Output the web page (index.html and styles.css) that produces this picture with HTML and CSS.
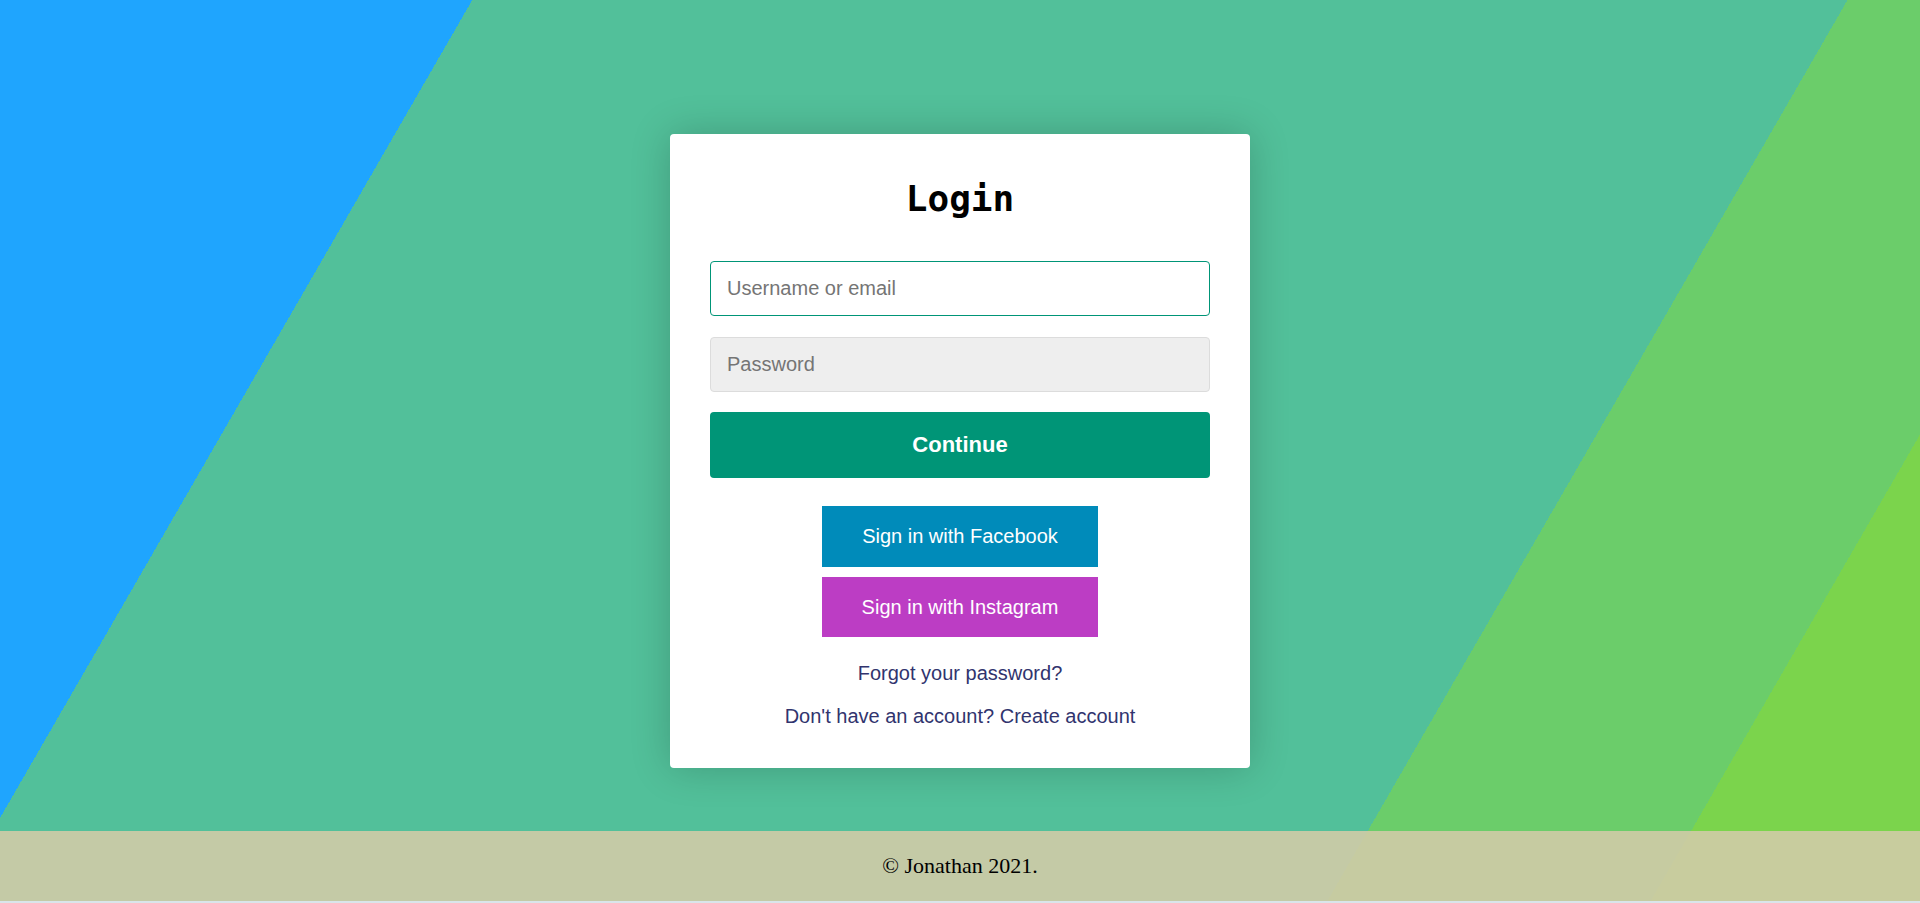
FILE: index.html
```html
<!DOCTYPE html>
<html lang="en">
<head>
<meta charset="utf-8">
<title>Login</title>
<link rel="stylesheet" href="styles.css">
</head>
<body>
<div class="page">
  <main class="main">
    <div class="card">
      <h1 class="title">Login</h1>
      <form class="form">
        <input class="field field-user" type="text" placeholder="Username or email">
        <input class="field field-pass" type="password" placeholder="Password">
        <button class="btn-continue" type="button">Continue</button>
      </form>
      <div class="social">
        <button class="btn-social btn-fb" type="button">Sign in with Facebook</button>
        <button class="btn-social btn-ig" type="button">Sign in with Instagram</button>
      </div>
      <div class="links">
        <a class="link" href="#">Forgot your password?</a>
        <a class="link" href="#">Don't have an account? Create account</a>
      </div>
    </div>
  </main>
  <footer class="footer">
    <p class="footer-text">© Jonathan 2021.</p>
  </footer>
</div>
<div class="strip"></div>
</body>
</html>
```

FILE: styles.css
```css
html, body {
  margin: 0;
  padding: 0;
}

body {
  height: 903px;
  overflow: hidden;
  background: #d9e5ea;
  font-family: "Liberation Sans", Arial, sans-serif;
}

.page {
  height: 901px;
  display: flex;
  flex-direction: column;
  background: linear-gradient(120deg,
    #1fa5fe 0, #1fa5fe 409px,
    #52c09a 409px, #52c09a 1600px,
    #6bcd6a 1600px, #6bcd6a 1880px,
    #7bd44c 1880px);
}

.main {
  flex: 1;
  display: flex;
  flex-direction: column;
  align-items: center;
  padding-top: 134px;
  box-sizing: border-box;
}

.card {
  width: 580px;
  box-sizing: border-box;
  background: #fff;
  border-radius: 4px;
  padding: 44px 40px 40px;
  box-shadow: 0 0 40px rgba(0, 0, 0, 0.2);
  display: flex;
  flex-direction: column;
}

.title {
  margin: 0 0 41px;
  font-family: "DejaVu Sans Mono", monospace;
  font-weight: bold;
  font-size: 36px;
  line-height: 42px;
  text-align: center;
  color: #000;
}

.form {
  display: flex;
  flex-direction: column;
  margin: 0;
}

.field {
  height: 55px;
  box-sizing: border-box;
  padding: 0 16px;
  font-family: "Liberation Sans", Arial, sans-serif;
  font-size: 20px;
  border-radius: 4px;
  outline: none;
  color: #333;
}

.field::placeholder {
  color: #757575;
}

.field-user {
  border: 1px solid #009577;
  background: #fff;
  margin-bottom: 21px;
}

.field-pass {
  border: 1px solid #dcdcdc;
  background: #eeeeee;
  margin-bottom: 20px;
}

.btn-continue {
  height: 66px;
  border: none;
  border-radius: 4px;
  background: #009577;
  color: #fff;
  font-family: "Liberation Sans", Arial, sans-serif;
  font-weight: bold;
  font-size: 22px;
  cursor: pointer;
}

.social {
  display: flex;
  flex-direction: column;
  align-items: center;
  gap: 10px;
  margin-top: 28px;
}

.btn-social {
  width: 276px;
  height: 60px;
  border: none;
  border-radius: 0;
  color: #fff;
  font-family: "Liberation Sans", Arial, sans-serif;
  font-size: 20px;
  cursor: pointer;
}

.btn-fb {
  background: #008bba;
  height: 61px;
}

.btn-ig {
  background: #bc3dc4;
}

.links {
  display: flex;
  flex-direction: column;
  align-items: center;
  gap: 20px;
  margin-top: 25px;
}

.link {
  font-size: 20px;
  line-height: 23px;
  color: #31346e;
  text-decoration: none;
}

.footer {
  height: 70px;
  display: flex;
  align-items: center;
  justify-content: center;
  background: rgba(208, 203, 167, 0.9);
}

.footer-text {
  margin: 0;
  font-family: "Liberation Serif", "Times New Roman", serif;
  font-size: 22px;
  color: #000;
}

.strip {
  height: 2px;
  background: #d9e5ea;
}
```
